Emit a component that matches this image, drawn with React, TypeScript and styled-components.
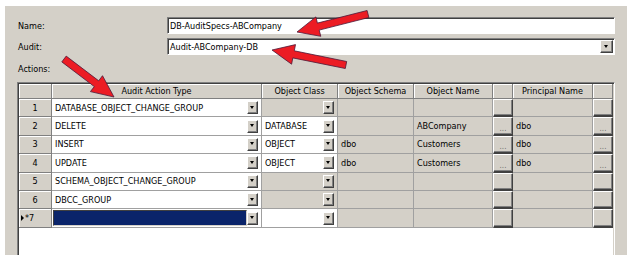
import React from "react";
import styled, { createGlobalStyle } from "styled-components";

const GlobalStyle = createGlobalStyle`
  html, body {
    margin: 0;
    padding: 0;
    background: #ffffff;
  }
  body {
    font-family: "DejaVu Sans Condensed", "DejaVu Sans", sans-serif;
    font-stretch: condensed;
    color: #000000;
  }
`;

type Tone = "white" | "gray" | "selected";

type Row = {
  num: string;
  action: string;
  objClass: string;
  classTone: Tone;
  schema: string;
  objName: string;
  principal: string;
  hasPick: boolean;
  current?: boolean;
};

const rows: Row[] = [
  { num: "1", action: "DATABASE_OBJECT_CHANGE_GROUP", objClass: "", classTone: "gray", schema: "", objName: "", principal: "", hasPick: false },
  { num: "2", action: "DELETE", objClass: "DATABASE", classTone: "white", schema: "", objName: "ABCompany", principal: "dbo", hasPick: true },
  { num: "3", action: "INSERT", objClass: "OBJECT", classTone: "white", schema: "dbo", objName: "Customers", principal: "dbo", hasPick: true },
  { num: "4", action: "UPDATE", objClass: "OBJECT", classTone: "white", schema: "dbo", objName: "Customers", principal: "dbo", hasPick: true },
  { num: "5", action: "SCHEMA_OBJECT_CHANGE_GROUP", objClass: "", classTone: "gray", schema: "", objName: "", principal: "", hasPick: false },
  { num: "6", action: "DBCC_GROUP", objClass: "", classTone: "gray", schema: "", objName: "", principal: "", hasPick: false },
  { num: "*7", action: "", objClass: "", classTone: "white", schema: "", objName: "", principal: "", hasPick: false, current: true },
];

const headers = ["", "Audit Action Type", "Object Class", "Object Schema", "Object Name", "", "Principal Name", ""];

// tail -> tip, drawn as one filled polygon
const arrowPoints = (x1: number, y1: number, x2: number, y2: number, shaft = 3.6, headLen = 22, headHalf = 10) => {
  const dx = x2 - x1;
  const dy = y2 - y1;
  const len = Math.hypot(dx, dy);
  const ux = dx / len;
  const uy = dy / len;
  const px = -uy;
  const py = ux;
  const bx = x2 - ux * headLen;
  const by = y2 - uy * headLen;
  const pts = [
    [x1 + px * shaft, y1 + py * shaft],
    [bx + px * shaft, by + py * shaft],
    [bx + px * headHalf, by + py * headHalf],
    [x2, y2],
    [bx - px * headHalf, by - py * headHalf],
    [bx - px * shaft, by - py * shaft],
    [x1 - px * shaft, y1 - py * shaft],
  ];
  return pts.map((p) => p.map((v) => v.toFixed(1)).join(",")).join(" ");
};

const Page = styled.div`
  position: relative;
  width: 635px;
  height: 264px;
  padding: 6px 0 0 5px;
  box-sizing: border-box;
  overflow: hidden;
`;

const Window = styled.div`
  width: 622px;
  height: 249px;
  box-sizing: border-box;
  padding: 11px 12px 0 13px;
  background: #d4d0c8;
  display: flex;
  flex-direction: column;
  overflow: hidden;
  font-size: 9px;
`;

const FieldRow = styled.div`
  display: flex;
  align-items: center;
  height: 17px;

  & + & {
    margin-top: 4px;
  }
`;

const Label = styled.div`
  width: 149px;
  flex: none;
`;

const TextBox = styled.div`
  flex: 1;
  height: 17px;
  box-sizing: border-box;
  display: flex;
  align-items: center;
  padding-left: 2px;
  background: #ffffff;
  border-top: 1px solid #808080;
  border-left: 1px solid #808080;
  border-right: 1px solid #ffffff;
  border-bottom: 1px solid #ffffff;
  box-shadow: inset 1px 1px 0 #404040;
`;

const ActionsLabel = styled.div`
  margin-top: 8px;
  height: 13px;
  line-height: 13px;
`;

const Grid = styled.div`
  margin: 6px 0 0 -1px;
  flex: 1;
  min-height: 200px;
  background: #ffffff;
  border-top: 1px solid #808080;
  border-left: 1px solid #808080;
  border-right: 1px solid #ffffff;
  box-shadow: inset 1px 1px 0 #404040, inset -1px 0 0 #d4d0c8;
  padding: 1px 1px 0 1px;
`;

const Table = styled.div`
  display: grid;
  grid-template-columns: 33px 210px 76px 76px 79px 20px 80px 20px;
  grid-template-rows: 15px;
  grid-auto-rows: 18.4px;
`;

const HeadCell = styled.div`
  box-sizing: border-box;
  background: #d4d0c8;
  border-right: 1px solid #808080;
  border-bottom: 1px solid #808080;
  box-shadow: inset 1px 1px 0 #ffffff;
  display: flex;
  align-items: center;
  justify-content: center;
  white-space: nowrap;
  overflow: hidden;
`;

const RowHead = styled.div<{ $current?: boolean }>`
  box-sizing: border-box;
  background: #d4d0c8;
  border-right: 1px solid #808080;
  border-bottom: 1px solid #808080;
  box-shadow: inset 1px 1px 0 #ffffff;
  display: flex;
  align-items: center;
  justify-content: ${(p) => (p.$current ? "flex-start" : "center")};
  padding-left: ${(p) => (p.$current ? "2px" : "0")};
  gap: 1px;
`;

const Pointer = styled.span`
  width: 0;
  height: 0;
  border-top: 3px solid transparent;
  border-bottom: 3px solid transparent;
  border-left: 3px solid #000000;
`;

const Cell = styled.div<{ $tone: Tone }>`
  box-sizing: border-box;
  display: flex;
  align-items: center;
  padding-left: 3px;
  background: ${(p) => (p.$tone === "gray" ? "#d4d0c8" : "#ffffff")};
  border-right: 1px solid #a0a0a0;
  border-bottom: 1px solid #a0a0a0;
  white-space: nowrap;
  overflow: hidden;
`;

const Selection = styled.div`
  flex: 1;
  align-self: stretch;
  margin: 1px 0 1px -2px;
  background: #0a246a;
  border: 1px solid #404040;
  border-right-color: #d4d0c8;
  border-bottom-color: #d4d0c8;
`;

const DropButton = styled.div`
  flex: none;
  margin-left: auto;
  margin-right: 3px;
  width: 11px;
  height: 13px;
  box-sizing: border-box;
  background: #d4d0c8;
  border-top: 1px solid #ffffff;
  border-left: 1px solid #ffffff;
  border-right: 1px solid #404040;
  border-bottom: 1px solid #404040;
  box-shadow: inset -1px -1px 0 #808080;
  display: flex;
  align-items: center;
  justify-content: center;

  &::after {
    content: "";
    width: 0;
    height: 0;
    margin: 0 1px 1px 0;
    border-left: 2.5px solid transparent;
    border-right: 2.5px solid transparent;
    border-top: 3px solid #000000;
  }
`;

const ComboButton = styled(DropButton)`
  margin-right: 1px;
  width: 13px;
  height: 13px;
`;

const PickCell = styled.div`
  box-sizing: border-box;
  background: #d4d0c8;
  border-top: 1px solid #ffffff;
  border-left: 1px solid #ffffff;
  border-right: 1px solid #404040;
  border-bottom: 2px solid #404040;
  box-shadow: inset -1px -1px 0 #808080;
  display: flex;
  align-items: flex-end;
  justify-content: center;
  padding-bottom: 1px;
  font-size: 8px;
  line-height: 8px;
  color: #707070;
`;

const Arrows = styled.svg`
  position: absolute;
  left: 0;
  top: 0;
  pointer-events: none;
`;

const App = () => {
  return (
    <Page>
      <GlobalStyle />
      <Window>
        <FieldRow>
          <Label>Name:</Label>
          <TextBox>DB-AuditSpecs-ABCompany</TextBox>
        </FieldRow>
        <FieldRow>
          <Label>Audit:</Label>
          <TextBox>
            Audit-ABCompany-DB
            <ComboButton />
          </TextBox>
        </FieldRow>
        <ActionsLabel>Actions:</ActionsLabel>
        <Grid>
          <Table>
            {headers.map((h, i) => (
              <HeadCell key={i}>{h}</HeadCell>
            ))}
            {rows.map((r) => (
              <React.Fragment key={r.num}>
                <RowHead $current={r.current}>
                  {r.current && <Pointer />}
                  {r.num}
                </RowHead>
                <Cell $tone="white">
                  {r.current ? <Selection /> : r.action}
                  <DropButton />
                </Cell>
                <Cell $tone={r.classTone}>
                  {r.objClass}
                  <DropButton />
                </Cell>
                <Cell $tone="gray">{r.schema}</Cell>
                <Cell $tone="gray">{r.objName}</Cell>
                <PickCell>{r.hasPick ? "..." : ""}</PickCell>
                <Cell $tone="gray">{r.principal}</Cell>
                <PickCell>{r.hasPick ? "..." : ""}</PickCell>
              </React.Fragment>
            ))}
          </Table>
        </Grid>
      </Window>
      <Arrows width="635" height="264" viewBox="0 0 635 264">
        <g fill="#ec1c24" stroke="#4a1a3a" strokeWidth="0.8" strokeLinejoin="round">
          <polygon points={arrowPoints(368, 14, 297, 32)} />
          <polygon points={arrowPoints(346, 65, 272, 50)} />
          <polygon points={arrowPoints(64, 59, 114, 97)} />
        </g>
      </Arrows>
    </Page>
  );
};

export default App;
